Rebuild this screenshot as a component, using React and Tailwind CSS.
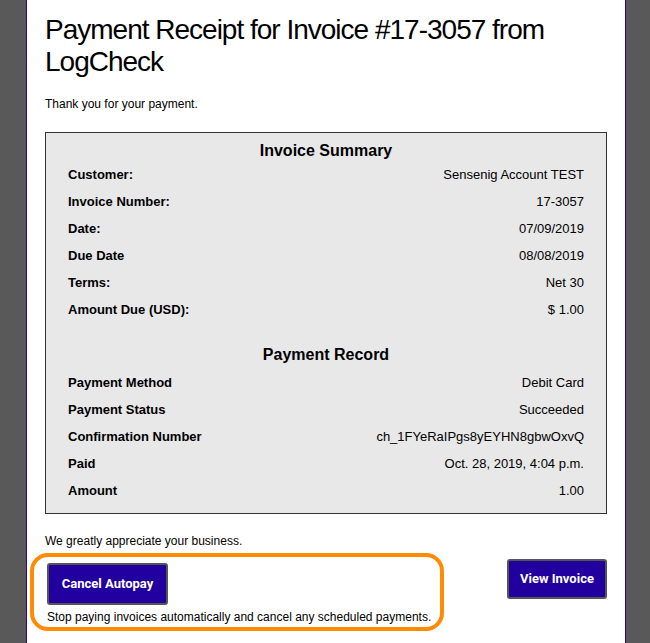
const summary = [
  ['Customer:', 'Sensenig Account TEST'],
  ['Invoice Number:', '17-3057'],
  ['Date:', '07/09/2019'],
  ['Due Date', '08/08/2019'],
  ['Terms:', 'Net 30'],
  ['Amount Due (USD):', '$ 1.00'],
];

const record = [
  ['Payment Method', 'Debit Card'],
  ['Payment Status', 'Succeeded'],
  ['Confirmation Number', 'ch_1FYeRaIPgs8yEYHN8gbwOxvQ'],
  ['Paid', 'Oct. 28, 2019, 4:04 p.m.'],
  ['Amount', '1.00'],
];

function Rows({ items }) {
  return (
    <div>
      {items.map(([label, value]) => (
        <div key={label} className="flex h-[27px] items-center justify-between text-[13px] leading-[15px] text-black">
          <span className="font-bold">{label}</span>
          <span>{value}</span>
        </div>
      ))}
    </div>
  );
}

export default function App() {
  return (
    <div className="min-h-screen bg-[#595959] font-['Liberation_Sans',Arial,sans-serif]">
      <div className="ml-[26px] min-h-[643px] w-[600px] border-x border-[#2a0096] bg-white px-[18px] pt-[14px]">
        <h1 className="text-[28px] leading-[32px] tracking-[-1px] text-black">
          Payment Receipt for Invoice #17-3057 from LogCheck
        </h1>
        <p className="mt-[19px] text-[12px] leading-[14px] text-black">Thank you for your payment.</p>

        <div className="mt-[21px] border border-[#333] bg-[#e8e8e8] px-[22px] pb-[9px] pt-[8px]">
          <h2 className="text-center text-[16px] font-bold leading-[20px] text-black">Invoice Summary</h2>
          <Rows items={summary} />
          <h2 className="mt-[22px] text-center text-[16px] font-bold leading-[20px] text-black">Payment Record</h2>
          <div className="mt-[4px]">
            <Rows items={record} />
          </div>
        </div>

        <p className="mt-[20px] text-[12px] leading-[14px] text-black">We greatly appreciate your business.</p>

        <div className="mt-[5px] flex items-start justify-between">
          <div className="-ml-[15px] w-[414px] rounded-[18px] border-4 border-[#ff8c00] pb-[3px] pl-[13px] pt-[6px]">
            <button className="h-[42px] w-[121px] rounded-[3px] border-2 border-[#555] bg-[#2200a0] font-['Roboto',sans-serif] text-[13px] font-bold text-white">
              Cancel Autopay
            </button>
            <p className="mt-[5px] text-[12px] leading-[14px] text-black">
              Stop paying invoices automatically and cancel any scheduled payments.
            </p>
          </div>
          <button className="mt-[6px] h-[40px] w-[100px] rounded-[3px] border-2 border-[#555] bg-[#2200a0] font-['Roboto',sans-serif] text-[13px] font-bold text-white">
            View Invoice
          </button>
        </div>
      </div>
    </div>
  );
}
